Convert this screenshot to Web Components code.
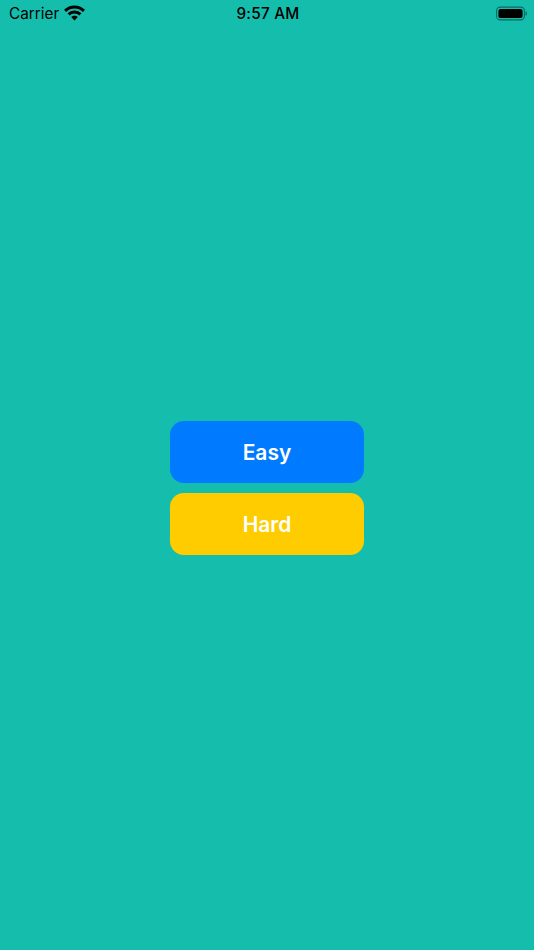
<!DOCTYPE html>
<html>
<head>
<meta charset="utf-8">
<title>Difficulty</title>
<style>
  html, body { margin: 0; height: 100%; background: #15beac; }
</style>
</head>
<body>
<app-screen>
  <status-bar slot="status"></status-bar>
  <menu-button color="#007aff">Easy</menu-button>
  <menu-button color="#ffcc00">Hard</menu-button>
</app-screen>
<script>
class AppScreen extends HTMLElement {
  connectedCallback() {
    this.attachShadow({ mode: 'open' });
    this.shadowRoot.innerHTML = `
      <style>
        :host {
          display: flex;
          flex-direction: column;
          height: 950px;
          background: #15beac;
          font-family: Inter, "Liberation Sans", sans-serif;
        }
        .menu {
          flex: 1;
          display: flex;
          flex-direction: column;
          align-items: center;
          justify-content: center;
          gap: 10px;
          padding-bottom: 2px;
        }
      </style>
      <slot name="status"></slot>
      <div class="menu"><slot></slot></div>
    `;
  }
}
customElements.define('app-screen', AppScreen);

class StatusBar extends HTMLElement {
  connectedCallback() {
    this.attachShadow({ mode: 'open' });
    this.shadowRoot.innerHTML = `
      <style>
        :host {
          display: grid;
          grid-template-columns: 1fr auto 1fr;
          align-items: center;
          height: 28px;
          padding: 0 7px 2px 9px;
          box-sizing: border-box;
          color: #000;
          font-size: 15.3px;
        }
        .left { display: flex; align-items: center; gap: 5px; }
        .carrier { font-weight: 400; }
        .time { font-weight: 500; letter-spacing: 0.25px; }
        .right { display: flex; justify-content: flex-end; }
        svg { display: block; }
      </style>
      <div class="left">
        <span class="carrier">Carrier</span>
        <svg width="21" height="16" viewBox="0 0 21 16" aria-hidden="true">
          <path d="M1 5.9C3.5 3.5 6.8 2 10.5 2s7 1.5 9.5 3.9" fill="none" stroke="#000" stroke-width="3.2"/>
          <path d="M4.6 9.4c1.5-1.5 3.6-2.4 5.9-2.4s4.4.9 5.9 2.4" fill="none" stroke="#000" stroke-width="3"/>
          <path d="M7.2 12c.9-.8 2-1.3 3.3-1.3s2.4.5 3.3 1.3l-3.3 3.5z" fill="#000"/>
        </svg>
      </div>
      <span class="time">9:57 AM</span>
      <div class="right">
        <svg width="31" height="15" viewBox="0 0 31 15" aria-hidden="true">
          <rect x="0.6" y="1.1" width="27.8" height="12.8" rx="3.6" fill="none" stroke="#000" stroke-opacity="0.45" stroke-width="1.1"/>
          <rect x="2.4" y="2.9" width="24.2" height="9.2" rx="2.2" fill="#000"/>
          <path d="M29.6 5.2c.8.3 1.3 1.2 1.3 2.3s-.5 2-1.3 2.3z" fill="#000" fill-opacity="0.5"/>
        </svg>
      </div>
    `;
  }
}
customElements.define('status-bar', StatusBar);

class MenuButton extends HTMLElement {
  connectedCallback() {
    this.attachShadow({ mode: 'open' });
    this.shadowRoot.innerHTML = `
      <style>
        :host {
          display: flex;
          align-items: center;
          justify-content: center;
          width: 194px;
          height: 62px;
          border-radius: 14px;
          background: ${this.getAttribute('color')};
          color: #fff;
          font-size: 21px;
          font-weight: 600;
        }
      </style>
      <slot></slot>
    `;
  }
}
customElements.define('menu-button', MenuButton);
</script>
</body>
</html>
